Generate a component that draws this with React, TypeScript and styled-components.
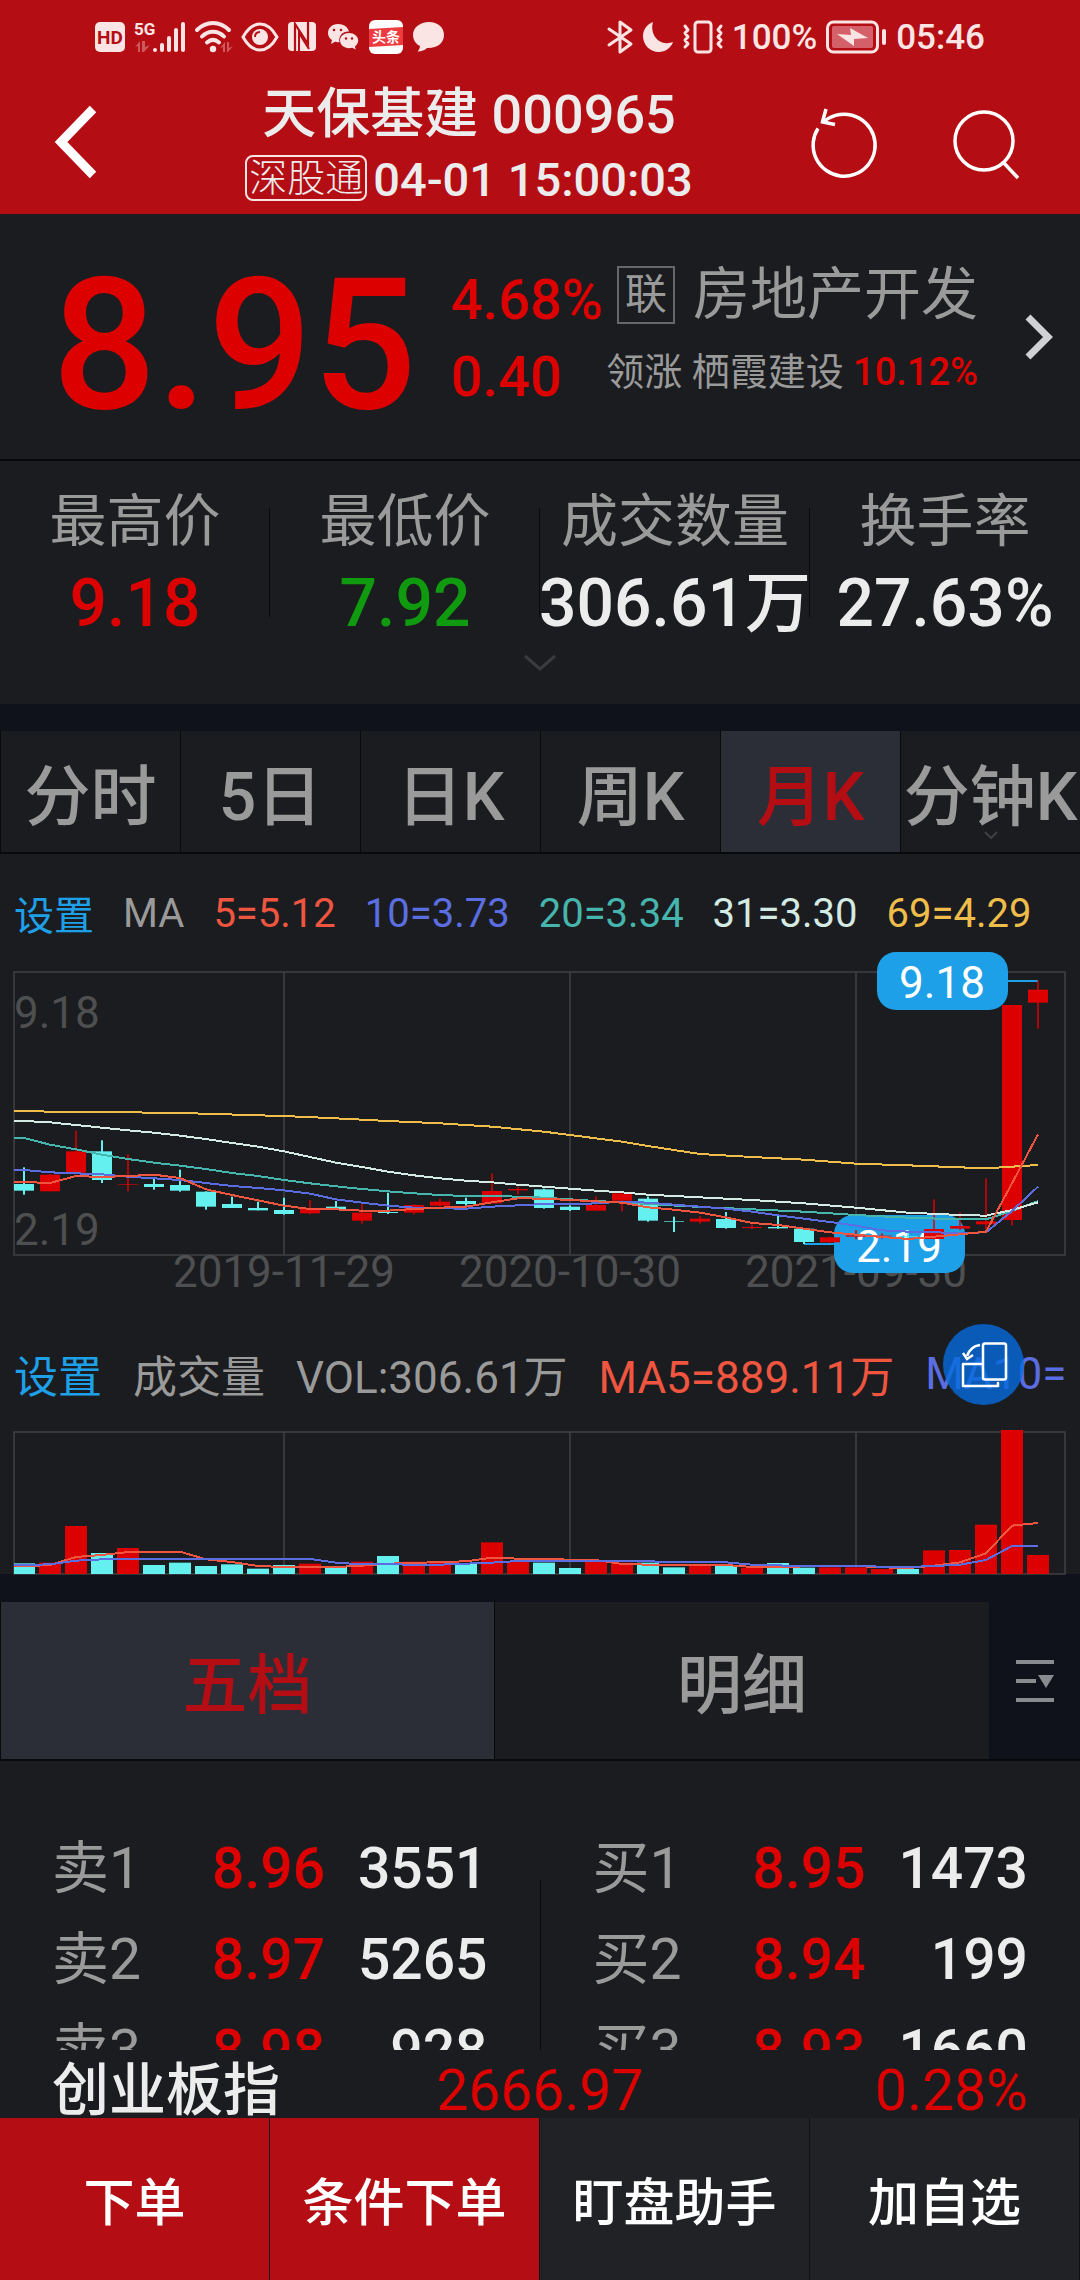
import React from "react";
import styled, { createGlobalStyle } from "styled-components";

const c = {
  brand: "#b40e14",
  panel: "#1b1c1f",
  gutter: "#0f121a",
  active: "#2b2e37",
  muted: "#9a9a9a",
  light: "#ececec",
  up: "#dc0000",
  down: "#0f9a0f",
  link: "#1ea0e8",
  status: "#fbe4e4",
};

const GlobalStyle = createGlobalStyle`
  *, *::before, *::after { box-sizing: border-box; }
  body {
    margin: 0;
    background: ${c.panel};
    font-family: Roboto, "Noto Sans CJK SC", sans-serif;
    font-weight: 500;
  }
  button { font: inherit; color: inherit; background: none; border: 0; padding: 0; }
  svg { display: block; overflow: visible; }
  h1, p, ul, dl, dd, dt { margin: 0; padding: 0; list-style: none; }
`;

const Page = styled.div`
  display: flex;
  flex-direction: column;
  height: 100vh;
  color: ${c.light};
`;

/* ---------- header ---------- */

const Header = styled.header`
  flex: none;
  background: ${c.brand};
`;

const StatusBar = styled.div`
  display: flex;
  justify-content: space-between;
  height: 74px;
  padding: 0 95px;
  font-size: 35px;
  color: ${c.status};
`;

const StatusGroup = styled.div`
  display: flex;
  align-items: center;
  gap: 9px;
`;

const TitleBar = styled.div`
  display: grid;
  grid-template-columns: 140px 1fr 282px;
  align-items: center;
  height: 140px;
`;

const BackButton = styled.button`
  display: flex;
  align-items: center;
  height: 100%;
  padding: 0 0 4px 51px;
`;

const TitleText = styled.div`
  display: flex;
  flex-direction: column;
  align-items: center;
  white-space: nowrap;
`;

const StockName = styled.h1`
  font-size: 54px;
  line-height: 72px;
  font-weight: 500;
`;

const SubTitle = styled.p`
  display: flex;
  align-items: center;
  gap: 6px;
  font-size: 47px;
  line-height: 58px;
`;

const MarketTag = styled.span`
  margin-bottom: 4px;
  padding: 0 2px;
  border: 2px solid ${c.status};
  border-radius: 8px;
  font-size: 38px;
  line-height: 42px;
  font-weight: 300;
`;

const Actions = styled.div`
  display: flex;
  justify-content: flex-end;
  gap: 74px;
  padding-right: 60px;
`;

/* ---------- quote ---------- */

const Quote = styled.section`
  flex: none;
  display: flex;
  align-items: center;
  height: 247px;
  padding: 0 26px 0 52px;
  border-bottom: 2px solid #060708;
`;

const Price = styled.strong`
  width: 399px;
  padding-top: 16px;
  font-size: 184px;
  line-height: 200px;
  font-weight: 500;
  color: ${c.up};
`;

const Change = styled.div`
  width: 154px;
  padding-top: 4px;
  font-size: 56px;
  line-height: 77px;
  color: ${c.up};
`;

const Sector = styled.div`
  flex: 1;
  display: flex;
  flex-direction: column;
  align-items: flex-end;
  padding: 0 46px 10px 0;
  white-space: nowrap;
  color: ${c.muted};
`;

const SectorName = styled.div`
  display: flex;
  align-items: center;
  gap: 18px;
  font-size: 57px;
  line-height: 80px;
  font-weight: 400;
`;

const SectorTag = styled.span`
  padding: 0 6px;
  border: 2px solid #66676a;
  font-size: 42px;
  line-height: 54px;
`;

const SectorLead = styled.div`
  font-size: 38px;
  line-height: 74px;
  font-weight: 400;
`;

const LeadChange = styled.span`
  font-weight: 500;
  color: ${c.up};
`;

/* ---------- stats ---------- */

const Stats = styled.section`
  flex: none;
  height: 243px;
  padding-top: 20px;
`;

const StatList = styled.dl`
  display: grid;
  grid-template-columns: repeat(4, minmax(0, 1fr));
`;

const Stat = styled.div`
  display: flex;
  flex-direction: column;
  align-items: center;
  white-space: nowrap;
  background: linear-gradient(#08090b, #08090b) right 27px / 1px 109px no-repeat;

  &:last-child { background: none; }
`;

const StatLabel = styled.dt`
  font-size: 57px;
  line-height: 82px;
  font-weight: 400;
  color: ${c.muted};
`;

const StatValue = styled.dd<{ $color?: string }>`
  font-size: 66px;
  line-height: 82px;
  color: ${(p) => p.$color ?? c.light};
`;

const Expand = styled.button`
  display: block;
  margin: 8px auto 0;
`;

const Gutter = styled.div<{ $height: number }>`
  flex: none;
  height: ${(p) => p.$height}px;
  background: ${c.gutter};
`;

/* ---------- tabs ---------- */

const PeriodTabs = styled.nav`
  flex: none;
  display: grid;
  grid-template-columns: repeat(6, minmax(0, 1fr));
  height: 123px;
  border-bottom: 2px solid #08090b;
`;

const PeriodTab = styled.button<{ $active?: boolean }>`
  position: relative;
  display: flex;
  align-items: center;
  justify-content: center;
  padding-bottom: 2px;
  border-left: 1px solid #08090b;
  white-space: nowrap;
  font-size: 66px;
  color: ${(p) => (p.$active ? c.brand : c.muted)};
  background: ${(p) => (p.$active ? c.active : "none")};
`;

const TabCaret = styled.span`
  position: absolute;
  bottom: 12px;
  left: 50%;
  margin-left: -7px;
`;

/* ---------- charts ---------- */

const ChartPanel = styled.section`
  flex: none;
  position: relative;
`;

const Legend = styled.ul<{ $size: number; $gap: number; $height: number }>`
  display: flex;
  align-items: center;
  gap: ${(p) => p.$gap}px;
  height: ${(p) => p.$height}px;
  margin: 0 14px;
  overflow: hidden;
  white-space: nowrap;
  font-size: ${(p) => p.$size}px;
  font-weight: 400;
`;

const LegendItem = styled.li<{ $color: string }>`
  color: ${(p) => p.$color};
`;

const ChartSvg = styled.svg`
  width: 100%;
  height: auto;
  font-size: 44px;
  font-weight: 400;
`;

const RotateButton = styled.button`
  position: absolute;
  top: 8px;
  right: 56px;
  width: 81px;
  height: 81px;
  display: flex;
  align-items: center;
  justify-content: center;
  border-radius: 50%;
  background: rgba(6, 108, 221, 0.8);
`;

/* ---------- order book ---------- */

const BookTabs = styled.nav`
  flex: none;
  display: grid;
  grid-template-columns: 494fr 495fr 91fr;
  height: 159px;
  border-bottom: 2px solid #08090b;
  background: ${c.gutter};
`;

const BookTab = styled.button<{ $active?: boolean }>`
  padding-bottom: 2px;
  border-left: 1px solid #08090b;
  font-size: 65px;
  color: ${(p) => (p.$active ? c.brand : c.muted)};
  background: ${(p) => (p.$active ? c.active : c.panel)};
`;

const MenuButton = styled.button`
  display: flex;
  align-items: center;
  justify-content: center;
`;

const Book = styled.section`
  flex: 1 1 0;
  min-height: 0;
  display: flex;
  overflow: hidden;
`;

const BookSide = styled.div`
  flex: 1;
  padding: 62px 52px 0;
`;

const BookDivider = styled.div`
  width: 1px;
  margin-top: 119px;
  background: #08090b;
`;

const Levels = styled.table`
  width: 100%;
  border-collapse: collapse;
  font-size: 57px;
  line-height: 91px;
`;

const LevelName = styled.th`
  width: 160px;
  padding: 0;
  text-align: left;
  font-weight: 400;
  color: ${c.muted};
`;

const LevelPrice = styled.td`
  padding: 0;
  color: ${c.up};
`;

const LevelVolume = styled.td`
  padding: 0;
  text-align: right;
`;

/* ---------- footer ---------- */

const IndexBar = styled.div`
  flex: none;
  display: grid;
  grid-template-columns: 1fr auto 1fr;
  align-items: center;
  height: 68px;
  padding: 14px 52px 0;
  font-size: 57px;
  line-height: 54px;
`;

const IndexValue = styled.span<{ $end?: boolean }>`
  font-weight: 400;
  text-align: ${(p) => (p.$end ? "right" : "center")};
  color: ${c.up};
`;

const BottomBar = styled.footer`
  flex: none;
  display: grid;
  grid-template-columns: repeat(4, 1fr);
  height: 162px;
`;

const BottomButton = styled.button<{ $primary?: boolean }>`
  border-right: 1px solid #101114;
  font-size: 51px;
  color: #fff;
  background: ${(p) => (p.$primary ? c.brand : "#212226")};
`;

/* ---------- data ---------- */

type Candle = [up: 0 | 1, high: number, top: number, bottom: number, low: number];

// Prices are stored in thirds of a chart unit, counted downwards.
const candles: Candle[] = [
  [0, 652, 702, 722, 734], [1, 672, 674, 724, 724], [1, 542, 604, 668, 668], [0, 571, 604, 690, 699],
  [1, 613, 703, 705, 724], [0, 684, 702, 711, 719], [0, 659, 705, 722, 725], [0, 724, 725, 770, 779],
  [0, 740, 762, 774, 774], [0, 755, 774, 781, 781], [0, 743, 780, 792, 794], [1, 750, 776, 790, 793],
  [0, 753, 770, 778, 778], [1, 763, 788, 812, 821], [0, 728, 786, 789, 792], [1, 763, 765, 788, 793],
  [1, 746, 755, 767, 770], [0, 743, 753, 762, 767], [1, 670, 723, 760, 760], [1, 710, 717, 721, 733],
  [0, 716, 718, 774, 776], [0, 766, 770, 780, 783], [1, 739, 765, 782, 782], [1, 728, 730, 752, 784],
  [0, 740, 746, 812, 815], [0, 800, 813, 815, 846], [1, 798, 806, 815, 821], [0, 786, 807, 834, 836],
  [1, 824, 831, 834, 837], [0, 794, 831, 835, 836], [0, 835, 836, 876, 882], [1, 860, 862, 877, 879],
  [1, 840, 856, 860, 868], [1, 850, 857, 859, 866], [0, 846, 858, 860, 872], [1, 748, 837, 867, 868],
  [1, 787, 828, 836, 840], [1, 685, 814, 823, 838], [1, 165, 165, 810, 826], [1, 92, 119, 158, 236],
];

type Point = [index: number, value: number];

const priceLines: { color: string; points: Point[] }[] = [
  { color: "#efbd4a", points: [[-0.4, 482], [1, 485], [3, 486], [5, 488], [7, 491], [9, 496], [10, 498], [12, 505], [14, 513], [16, 520], [18, 530], [20, 545], [21, 555], [23, 575], [24, 588], [26, 612], [28, 621], [30, 629], [32, 641], [34, 646], [36, 652], [37, 655], [38, 650], [39, 645]] },
  { color: "#45b5ad", points: [[-0.4, 564], [0, 564], [1, 584], [2, 598], [3, 614], [4, 627], [5, 638], [6, 647], [7, 657], [8, 669], [9, 678], [10, 690], [11, 700], [12, 709], [13, 717], [14, 724], [15, 730], [16, 735], [17, 738], [18, 738], [19, 740], [20, 743], [21, 748], [22, 753], [23, 757], [24, 762], [26, 771], [28, 778], [30, 785], [32, 795], [34, 803], [36, 808], [37, 808], [38, 783], [39, 753]] },
  { color: "#d4ebe4", points: [[-0.4, 512], [0, 513], [1, 517], [2, 525], [3, 533], [4, 541], [5, 548], [6, 557], [7, 567], [8, 579], [9, 590], [10, 604], [11, 621], [12, 638], [13, 651], [14, 665], [15, 676], [16, 685], [17, 692], [18, 697], [19, 704], [20, 710], [21, 716], [22, 722], [23, 727], [24, 734], [26, 742], [28, 750], [30, 760], [32, 773], [34, 788], [36, 795], [37, 797], [38, 780], [39, 757]] },
  { color: "#5b6ee1", points: [[-0.4, 659], [0, 660], [1, 667], [2, 670], [3, 673], [4, 680], [5, 685], [6, 690], [7, 699], [8, 708], [9, 714], [10, 721], [11, 731], [12, 748], [13, 758], [14, 767], [15, 773], [16, 775], [17, 776], [18, 770], [19, 766], [20, 762], [21, 763], [22, 760], [23, 755], [24, 758], [25, 764], [26, 770], [27, 776], [28, 785], [29, 796], [30, 806], [31, 816], [32, 827], [33, 841], [34, 845], [35, 847], [36, 849], [37, 847], [38, 783], [39, 710]] },
  { color: "#f0563f", points: [[-0.4, 695], [0, 696], [1, 699], [2, 678], [3, 681], [4, 678], [5, 674], [6, 684], [7, 718], [8, 735], [9, 751], [10, 767], [11, 777], [12, 778], [13, 782], [14, 782], [15, 777], [16, 773], [17, 770], [18, 757], [19, 745], [20, 746], [21, 750], [22, 754], [23, 758], [24, 772], [25, 779], [26, 788], [27, 802], [28, 819], [29, 825], [30, 836], [31, 847], [32, 854], [33, 861], [34, 867], [35, 860], [36, 853], [37, 845], [38, 700], [39, 553]] },
];

const volumeTops = [
  730, 728, 618, 699, 684, 735, 728, 738, 733, 746, 735, 731, 740, 725, 708, 725, 728, 731, 667, 724,
  728, 744, 726, 728, 728, 742, 735, 735, 743, 729, 743, 742, 742, 747, 747, 691, 690, 614, 330, 705,
];

const volumeLines: { color: string; values: number[] }[] = [
  { color: "#f0563f", values: [739, 735, 711, 705, 696, 696, 695, 718, 726, 738, 741, 741, 741, 737, 731, 729, 726, 724, 713, 716, 717, 719, 720, 732, 734, 735, 735, 735, 741, 742, 739, 738, 738, 742, 744, 737, 727, 700, 617, 609] },
  { color: "#5b6ee1", values: [735, 733, 722, 718, 716, 716, 716, 716, 716, 716, 716, 717, 728, 733, 733, 734, 734, 731, 728, 723, 722, 723, 723, 724, 724, 726, 726, 727, 734, 736, 739, 739, 738, 740, 741, 738, 734, 720, 678, 678] },
];

const tickX = [284, 570, 856];
const tickLabels = ["2019-11-29", "2020-10-30", "2021-09-30"];

const xAt = (i: number) => 24 + i * 26;
const priceY = (v: number) => v / 3 - 22;
const volumeY = (v: number) => v / 3 - 112;

function PriceChart() {
  return (
    <ChartSvg viewBox="0 0 1080 344" role="img" aria-label="月K">
      <g stroke="#3f4043" fill="none" strokeWidth="1.5">
        <rect x="14" y="0" width="1051" height="283" />
        {tickX.map((x) => <line key={x} x1={x} x2={x} y1="0" y2="283" />)}
      </g>
      <g fill="#4e4f51">
        <text x="14" y="56">9.18</text>
        <text x="14" y="273">2.19</text>
        <g textAnchor="middle">
          {tickLabels.map((t, i) => <text key={t} x={tickX[i]} y="315">{t}</text>)}
        </g>
      </g>
      <g stroke={c.link} strokeWidth="2">
        <line x1="1000" x2="1038" y1="9" y2="9" />
        <line x1="804" x2="840" y1="272" y2="272" />
      </g>
      <g fill={c.link}>
        <rect x="877" y="-20" width="131" height="58" rx="19" />
        <rect x="834" y="243" width="131" height="58" rx="19" />
      </g>
      <g fill="#fff" textAnchor="middle">
        <text x="942" y="26">9.18</text>
        <text x="899" y="290">2.19</text>
      </g>
      {candles.map(([up, high, top, bottom, low], i) => {
        const x = xAt(i);
        const left = Math.max(x - 10, 14);
        return (
          <g key={i} fill={up ? c.up : "#64f0ee"}>
            <rect x={x - 1} y={priceY(high)} width="2" height={(low - high) / 3} opacity={up ? 0.75 : 1} />
            <rect x={left} y={priceY(top)} width={x + 10 - left} height={(bottom - top) / 3} />
          </g>
        );
      })}
      {priceLines.map((l) => (
        <polyline
          key={l.color}
          fill="none"
          stroke={l.color}
          strokeWidth="2"
          shapeRendering="crispEdges"
          points={l.points.map(([i, v]) => `${xAt(i)},${priceY(v)}`).join(" ")}
        />
      ))}
    </ChartSvg>
  );
}

function VolumeChart() {
  return (
    <ChartSvg viewBox="0 0 1080 142" role="img" aria-label="成交量">
      <g stroke="#3f4043" fill="none" strokeWidth="1.5">
        <rect x="14" y="0" width="1051" height="142" />
        {tickX.map((x) => <line key={x} x1={x} x2={x} y1="0" y2="142" />)}
      </g>
      {volumeTops.map((v, i) => {
        const left = Math.max(xAt(i) - 11, 14);
        return (
          <rect
            key={i}
            x={left}
            y={volumeY(v)}
            width={xAt(i) + 11 - left}
            height={142 - volumeY(v)}
            fill={candles[i][0] ? c.up : "#64f0ee"}
          />
        );
      })}
      {volumeLines.map((l) => (
        <polyline
          key={l.color}
          fill="none"
          stroke={l.color}
          strokeWidth="2"
          shapeRendering="crispEdges"
          points={[`14,${volumeY(l.values[0])}`, ...l.values.map((v, i) => `${xAt(i)},${volumeY(v)}`)].join(" ")}
        />
      ))}
    </ChartSvg>
  );
}

/* ---------- icons ---------- */

const HdIcon = () => (
  <svg width="30" height="30" viewBox="0 0 30 30">
    <rect width="30" height="30" rx="5" fill={c.status} />
    <text x="15" y="22" textAnchor="middle" fontSize="19" fontWeight="700" fill={c.brand}>HD</text>
  </svg>
);

const SignalIcon = () => (
  <svg width="52" height="36" viewBox="0 -2 52 36" fill={c.status}>
    <text x="0" y="14" fontSize="17" fontWeight="700">5G</text>
    <path
      d="M21 29v0M28 24v5M35 17v12M42 9v20M49 3v26"
      stroke={c.status}
      strokeWidth="4"
      strokeLinecap="round"
    />
    <path d="M1 26l5-6v11H4v-6zM8 20h3v6l5-2-6 7H8z" opacity=".35" />
  </svg>
);

const WifiIcon = () => (
  <svg width="37" height="32" viewBox="0 0 37 32" fill="none" stroke={c.status} strokeWidth="4" strokeLinecap="round">
    <path d="M2 9C11-.5 25-.5 34 9M7 15.5c6-6.5 16-6.5 22 0M12 21.5c4-3.5 8-3.5 12 0" />
    <circle cx="18" cy="28" r="3.2" fill={c.status} stroke="none" />
    <path d="M25 27l5-6v10h-2v-5zM32 21h2v6l4-2-5 6h-1z" opacity=".35" fill={c.status} stroke="none" />
  </svg>
);

const EyeIcon = () => (
  <svg width="38" height="32" viewBox="0 0 38 32">
    <path d="M2 16C7 7 13 3 19 3s12 4 17 13c-5 9-11 13-17 13S7 25 2 16z" fill="none" stroke={c.status} strokeWidth="3" />
    <circle cx="19" cy="16" r="8" fill={c.status} />
    <path d="M14 16c0-3 2-5 5-5" stroke={c.brand} strokeWidth="2" fill="none" />
  </svg>
);

const NfcIcon = () => (
  <svg width="28" height="30" viewBox="0 0 28 30">
    <rect width="28" height="29" rx="4" fill={c.status} />
    <path d="M7 29V2l13 20V0" fill="none" stroke={c.brand} strokeWidth="2.2" />
    <path d="M11 29V11l10 16" fill="none" stroke={c.brand} strokeWidth="2" />
  </svg>
);

const WechatIcon = () => (
  <svg width="35" height="30" viewBox="-2 0 35 30">
    <path d="M11 2C5 2 1 6 1 11c0 3 1.5 5.5 4 7l-1 4 4-2.2c2 .5 3 .5 4.5.2C11 14 16 9 22 9.5 21 5 16.500 2 11 2z" fill={c.status} />
    <path d="M22 11c-5 0-9 3.300-9 7.600s4 7.600 9 7.600c1.200 0 2.300-.2 3.300-.5l3.400 1.900-.8-3.200c2-1.400 3.300-3.400 3.300-5.800 0-4.300-4.200-7.600-9.200-7.600z" fill={c.status} />
    <g fill={c.brand}>
      <circle cx="7" cy="8" r="1.3" />
      <circle cx="14" cy="8" r="1.3" />
      <circle cx="19" cy="16.5" r="1.2" />
      <circle cx="25" cy="16.5" r="1.2" />
    </g>
  </svg>
);

const NewsIcon = () => (
  <svg width="34" height="34" viewBox="0 0 34 34">
    <rect width="34" height="34" rx="6" fill="#fff" />
    <path d="M0 9l34-2v18l-34 2z" fill="#ee3b40" />
    <text x="17" y="22" textAnchor="middle" fontSize="14" fontWeight="700" fill="#fff">头条</text>
  </svg>
);

const BubbleIcon = () => (
  <svg width="33" height="32" viewBox="0 0 33 32" fill={c.status}>
    <path d="M17 1C8 1 1 6.500 1 14c0 5 3 9 7 11-.2 2-1 4-2.500 5.500 4 0 7.500-1.500 9.500-3.500 10 .5 17-5 17-13C32 6.500 26 1 17 1z" />
  </svg>
);

const BluetoothIcon = () => (
  <svg width="26" height="34" viewBox="0 0 26 34" fill="none" stroke={c.status} strokeWidth="3" strokeLinejoin="round" strokeLinecap="round">
    <path d="M2 9l22 15-11 8V2l11 8L2 25" />
  </svg>
);

const MoonIcon = () => (
  <svg width="32" height="32" viewBox="0 0 32 32" fill={c.status}>
    <path d="M11 1C5 3 1 9 1 15c0 9 7 16 16 16 6 0 12-4 14-10-3 1-5 1.500-8 1C14 21 8 11 11 1z" />
  </svg>
);

const VibrateIcon = () => (
  <svg width="40" height="34" viewBox="0 0 40 34" fill="none" stroke={c.status} strokeWidth="3" strokeLinecap="round" strokeLinejoin="round">
    <rect x="12" y="2" width="16" height="30" rx="3" />
    <path d="M2 6l3 4-3 3 3 4-3 3 3 4-3 3M38 6l-3 4 3 3-3 4 3 3-3 4 3 3" />
  </svg>
);

const BatteryIcon = () => (
  <svg width="61" height="34" viewBox="0 0 61 34">
    <rect x="1.5" y="2" width="50" height="30" rx="6" fill="none" stroke={c.status} strokeWidth="3" />
    <rect x="6" y="6" width="41" height="22" rx="2" fill="#d4606a" />
    <path d="M11 14l14 1-1-7 18 10-14 1 0 7z" fill={c.status} />
    <rect x="56" y="9" width="4" height="16" rx="2" fill={c.status} />
  </svg>
);

const BackIcon = () => (
  <svg width="46" height="76" viewBox="0 0 46 76" fill="none" stroke="#fff" strokeWidth="9">
    <path d="M42 5L10 38l32 33" />
  </svg>
);

const RefreshIcon = () => (
  <svg width="68" height="72" viewBox="1 2 68 72" fill="none" stroke="#fff" strokeWidth="3.5">
    <path d="M14 16.500A31 31 0 1 1 9 22.500" />
    <path d="M17 3l-3.500 13L26 18.500" />
  </svg>
);

const SearchIcon = () => (
  <svg width="68" height="72" viewBox="0 0 68 72" fill="none" stroke="#fff" strokeWidth="3.5">
    <circle cx="32" cy="33" r="29" />
    <path d="M51 54l15 16" />
  </svg>
);

const Chevron = ({ w, h, d, stroke, weight }: { w: number; h: number; d: string; stroke: string; weight: number }) => (
  <svg width={w} height={h} viewBox={`0 0 ${w} ${h}`} fill="none" stroke={stroke} strokeWidth={weight}>
    <path d={d} />
  </svg>
);

const RotateIcon = () => (
  <svg width="46" height="46" viewBox="0 0 46 46" fill="none" stroke="#fff" strokeWidth="2.5">
    <rect x="22" y="1.5" width="23" height="36" rx="2" />
    <path d="M20 22H2v22h35v-3" strokeLinejoin="round" strokeLinecap="round" />
    <path d="M19 3C12 4 8 8 6 14M2 11l4 6 6-4" />
  </svg>
);

const MenuIcon = () => (
  <svg width="38" height="42" viewBox="0 0 38 42" fill="#8a8b8e">
    <rect y="0" width="38" height="4" />
    <rect y="19" width="20" height="4" />
    <rect y="38" width="38" height="4" />
    <path d="M22 15h16l-8 13z" />
  </svg>
);

/* ---------- page ---------- */

const stats = [
  { label: "最高价", value: "9.18", color: c.up },
  { label: "最低价", value: "7.92", color: c.down },
  { label: "成交数量", value: "306.61万" },
  { label: "换手率", value: "27.63%" },
];

const periods = ["分时", "5日", "日K", "周K", "月K", "分钟K"];

const priceLegend = [
  { text: "设置", color: c.link },
  { text: "MA", color: c.muted },
  { text: "5=5.12", color: "#f0563f" },
  { text: "10=3.73", color: "#5b6ee1" },
  { text: "20=3.34", color: "#45b5ad" },
  { text: "31=3.30", color: "#d4ebe4" },
  { text: "69=4.29", color: "#efbd4a" },
];

const volumeLegend = [
  { text: "设置", color: c.link },
  { text: "成交量", color: c.muted },
  { text: "VOL:306.61万", color: c.muted },
  { text: "MA5=889.11万", color: "#f0563f" },
  { text: "MA10=", color: "#5b6ee1" },
];

const sells = [["卖1", "8.96", "3551"], ["卖2", "8.97", "5265"], ["卖3", "8.98", "928"]];
const buys = [["买1", "8.95", "1473"], ["买2", "8.94", "199"], ["买3", "8.93", "1660"]];

const BookLevels = ({ rows }: { rows: string[][] }) => (
  <BookSide>
    <Levels>
      <tbody>
        {rows.map(([name, price, volume]) => (
          <tr key={name}>
            <LevelName scope="row">{name}</LevelName>
            <LevelPrice>{price}</LevelPrice>
            <LevelVolume>{volume}</LevelVolume>
          </tr>
        ))}
      </tbody>
    </Levels>
  </BookSide>
);

export default function App() {
  return (
    <Page>
      <GlobalStyle />
      <Header>
        <StatusBar>
          <StatusGroup>
            <HdIcon />
            <SignalIcon />
            <WifiIcon />
            <EyeIcon />
            <NfcIcon />
            <WechatIcon />
            <NewsIcon />
            <BubbleIcon />
          </StatusGroup>
          <StatusGroup>
            <BluetoothIcon />
            <MoonIcon />
            <VibrateIcon />
            <span>100%</span>
            <BatteryIcon />
            <span>05:46</span>
          </StatusGroup>
        </StatusBar>
        <TitleBar>
          <BackButton aria-label="返回"><BackIcon /></BackButton>
          <TitleText>
            <StockName>天保基建 000965</StockName>
            <SubTitle>
              <MarketTag>深股通</MarketTag>
              <span>04-01 15:00:03</span>
            </SubTitle>
          </TitleText>
          <Actions>
            <button aria-label="刷新"><RefreshIcon /></button>
            <button aria-label="搜索"><SearchIcon /></button>
          </Actions>
        </TitleBar>
      </Header>

      <Quote>
        <Price>8.95</Price>
        <Change>
          <div>4.68%</div>
          <div>0.40</div>
        </Change>
        <Sector>
          <SectorName><SectorTag>联</SectorTag>房地产开发</SectorName>
          <SectorLead>领涨 栖霞建设 <LeadChange>10.12%</LeadChange></SectorLead>
        </Sector>
        <button aria-label="板块详情">
          <Chevron w={30} h={46} d="M4 3l20 20-20 20" stroke="#d0d1d4" weight={7} />
        </button>
      </Quote>

      <Stats>
        <StatList>
          {stats.map((s) => (
            <Stat key={s.label}>
              <StatLabel>{s.label}</StatLabel>
              <StatValue $color={s.color}>{s.value}</StatValue>
            </Stat>
          ))}
        </StatList>
        <Expand aria-label="展开">
          <Chevron w={34} h={20} d="M2 3l15 13L32 3" stroke="#3a3b3f" weight={3} />
        </Expand>
      </Stats>
      <Gutter $height={27} />

      <PeriodTabs>
        {periods.map((p) => (
          <PeriodTab key={p} $active={p === "月K"}>
            {p}
            {p === "分钟K" && (
              <TabCaret><Chevron w={15} h={9} d="M1 1l6 6 6-6" stroke="#3f4044" weight={2} /></TabCaret>
            )}
          </PeriodTab>
        ))}
      </PeriodTabs>

      <ChartPanel>
        <Legend $size={40} $gap={29} $height={118}>
          {priceLegend.map((l) => <LegendItem key={l.text} $color={l.color}>{l.text}</LegendItem>)}
        </Legend>
        <PriceChart />
      </ChartPanel>
      <ChartPanel>
        <Legend $size={44} $gap={31} $height={116}>
          {volumeLegend.map((l) => <LegendItem key={l.text} $color={l.color}>{l.text}</LegendItem>)}
        </Legend>
        <VolumeChart />
        <RotateButton aria-label="横屏"><RotateIcon /></RotateButton>
      </ChartPanel>
      <Gutter $height={28} />

      <BookTabs>
        <BookTab $active>五档</BookTab>
        <BookTab>明细</BookTab>
        <MenuButton aria-label="菜单"><MenuIcon /></MenuButton>
      </BookTabs>
      <Book>
        <BookLevels rows={sells} />
        <BookDivider />
        <BookLevels rows={buys} />
      </Book>

      <IndexBar>
        <span>创业板指</span>
        <IndexValue>2666.97</IndexValue>
        <IndexValue $end>0.28%</IndexValue>
      </IndexBar>
      <BottomBar>
        <BottomButton $primary>下单</BottomButton>
        <BottomButton $primary>条件下单</BottomButton>
        <BottomButton>盯盘助手</BottomButton>
        <BottomButton>加自选</BottomButton>
      </BottomBar>
    </Page>
  );
}
